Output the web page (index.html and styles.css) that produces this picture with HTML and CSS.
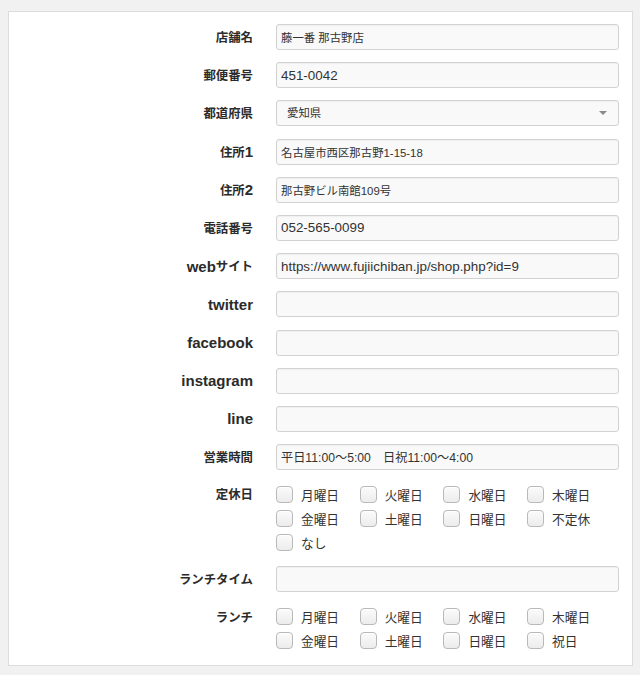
FILE: index.html
```html
<!DOCTYPE html>
<html lang="ja">
<head>
<meta charset="utf-8">
<title>店舗情報</title>
<link rel="stylesheet" href="styles.css">
</head>
<body>
<form class="panel">
  <label class="label ja">店舗名</label>
  <input class="field ja-val" type="text" value="藤一番 那古野店">

  <label class="label ja">郵便番号</label>
  <input class="field" type="text" value="451-0042">

  <label class="label ja">都道府県</label>
  <div class="select-wrap">
    <select class="field select ja-val"><option>愛知県</option></select>
  </div>

  <label class="label"><span class="ja">住所</span>1</label>
  <input class="field ja-val" type="text" value="名古屋市西区那古野1-15-18">

  <label class="label"><span class="ja">住所</span>2</label>
  <input class="field ja-val" type="text" value="那古野ビル南館109号">

  <label class="label ja">電話番号</label>
  <input class="field" type="text" value="052-565-0099">

  <label class="label">web<span class="ja">サイト</span></label>
  <input class="field" type="text" value="https://www.fujiichiban.jp/shop.php?id=9">

  <label class="label">twitter</label>
  <input class="field" type="text" value="">

  <label class="label">facebook</label>
  <input class="field" type="text" value="">

  <label class="label">instagram</label>
  <input class="field" type="text" value="">

  <label class="label">line</label>
  <input class="field" type="text" value="">

  <label class="label ja">営業時間</label>
  <input class="field mixed-val" type="text" value="平日11:00～5:00　日祝11:00～4:00">

  <div class="label ja top">定休日</div>
  <div class="checks">
    <label class="check"><input type="checkbox"><span>月曜日</span></label>
    <label class="check"><input type="checkbox"><span>火曜日</span></label>
    <label class="check"><input type="checkbox"><span>水曜日</span></label>
    <label class="check"><input type="checkbox"><span>木曜日</span></label>
    <label class="check"><input type="checkbox"><span>金曜日</span></label>
    <label class="check"><input type="checkbox"><span>土曜日</span></label>
    <label class="check"><input type="checkbox"><span>日曜日</span></label>
    <label class="check"><input type="checkbox"><span>不定休</span></label>
    <label class="check"><input type="checkbox"><span>なし</span></label>
  </div>

  <label class="label ja">ランチタイム</label>
  <input class="field" type="text" value="">

  <div class="label ja top">ランチ</div>
  <div class="checks">
    <label class="check"><input type="checkbox"><span>月曜日</span></label>
    <label class="check"><input type="checkbox"><span>火曜日</span></label>
    <label class="check"><input type="checkbox"><span>水曜日</span></label>
    <label class="check"><input type="checkbox"><span>木曜日</span></label>
    <label class="check"><input type="checkbox"><span>金曜日</span></label>
    <label class="check"><input type="checkbox"><span>土曜日</span></label>
    <label class="check"><input type="checkbox"><span>日曜日</span></label>
    <label class="check"><input type="checkbox"><span>祝日</span></label>
  </div>
</form>
</body>
</html>
```
FILE: styles.css
```css
html, body {
  margin: 0;
  padding: 0;
}

body {
  background: #f1f1f1;
  font-family: "Liberation Sans", "Noto Sans CJK JP", sans-serif;
  color: #333;
  padding: 11px 7px 0 8px;
}

.panel {
  background: #fff;
  border: 1px solid #dcdcdc;
  padding: 12px 13px 12px 0;
  display: grid;
  grid-template-columns: 244px 343px;
  column-gap: 23px;
  row-gap: 12.2px;
  box-sizing: border-box;
  width: 625px;
}

.label {
  height: 26px;
  display: flex;
  align-items: center;
  justify-content: flex-end;
  font-weight: bold;
  font-size: 15px;
  color: #2b2b2b;
  white-space: nowrap;
}

.label.ja,
.label .ja {
  font-size: 12.4px;
}

.label.top {
  height: 24px;
  align-self: start;
}

.field {
  box-sizing: border-box;
  width: 343px;
  height: 26px;
  margin: 0;
  padding: 0 4px;
  border: 1px solid #d2d2d2;
  border-radius: 3px;
  background: #f9f9f9;
  box-shadow: inset 0 1px 1px rgba(0, 0, 0, 0.04);
  font-family: "Liberation Sans", "Noto Sans CJK JP", sans-serif;
  font-size: 13.4px;
  color: #333;
  outline: none;
}

.field.ja-val {
  font-size: 11.4px;
}

.field.mixed-val {
  font-size: 12.2px;
}

.select-wrap {
  position: relative;
  width: 343px;
  height: 26px;
}

.select {
  appearance: none;
  -webkit-appearance: none;
  padding-left: 10px;
  font-size: 11.2px;
}

.select-wrap::after {
  content: "";
  position: absolute;
  right: 12px;
  top: 11px;
  width: 0;
  height: 0;
  border-left: 4px solid transparent;
  border-right: 4px solid transparent;
  border-top: 4px solid #8a8a8a;
  pointer-events: none;
}

.checks {
  display: grid;
  grid-template-columns: repeat(4, 83.7px);
  grid-auto-rows: 24px;
}

.check {
  display: flex;
  align-items: center;
  font-size: 12.7px;
  color: #333;
  white-space: nowrap;
}

.check input {
  appearance: none;
  -webkit-appearance: none;
  box-sizing: border-box;
  width: 17px;
  height: 17px;
  margin: 0 8px 0 0;
  border: 1px solid #b9b9b9;
  border-radius: 4px;
  background: linear-gradient(#fbfbfb, #ececec);
  box-shadow: inset 0 1px 0 #fff;
}
```
